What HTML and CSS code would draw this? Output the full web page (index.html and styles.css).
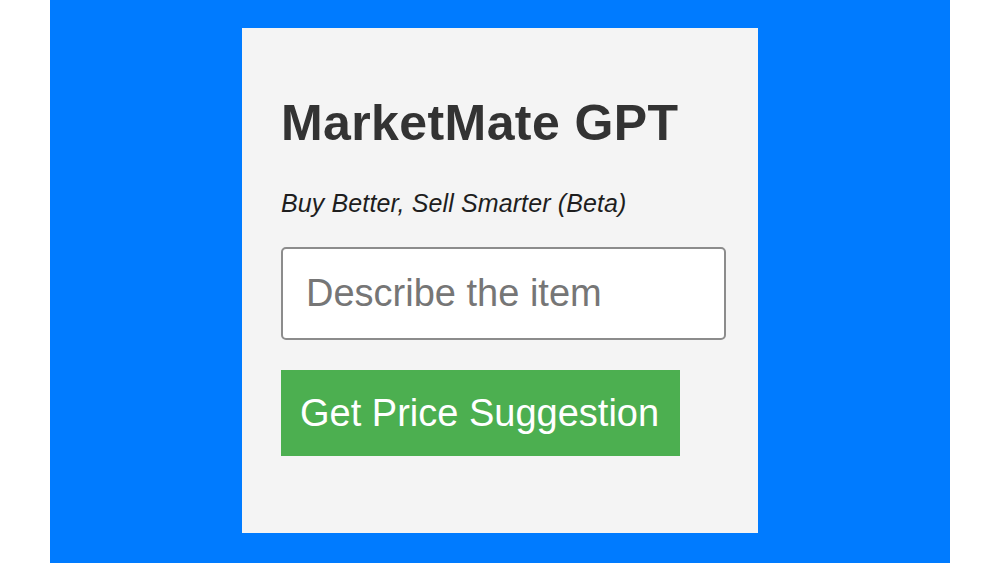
FILE: index.html
```html
<!DOCTYPE html>
<html lang="en">
<head>
<meta charset="utf-8">
<title>MarketMate GPT</title>
<link rel="stylesheet" href="styles.css">
</head>
<body>
<div class="stage">
  <main class="card">
    <h1 class="title">MarketMate GPT</h1>
    <p class="tagline">Buy Better, Sell Smarter (Beta)</p>
    <input class="item-input" type="text" placeholder="Describe the item">
    <div class="actions">
      <button class="suggest-btn" type="button">Get Price Suggestion</button>
    </div>
  </main>
</div>
</body>
</html>
```

FILE: styles.css
```css
html, body {
  margin: 0;
  padding: 0;
  background: #ffffff;
  height: 100%;
}

body {
  font-family: "Liberation Sans", Arial, Helvetica, sans-serif;
}

.stage {
  margin: 0 50px;
  height: 563px;
  background: #007bff;
  display: flex;
  justify-content: center;
  align-items: flex-start;
  overflow: hidden;
}

.card {
  box-sizing: border-box;
  margin-top: 28px;
  width: 516px;
  height: 505px;
  background: #f4f4f4;
  padding: 67px 33px 0 39px;
  display: flex;
  flex-direction: column;
  align-items: flex-start;
}

.title {
  margin: 0;
  font-size: 50px;
  line-height: 57.5px;
  font-weight: bold;
  color: #333333;
  letter-spacing: 0.4px;
}

.tagline {
  margin: 36px 0 0 0;
  font-size: 25px;
  line-height: 28.75px;
  font-style: italic;
  color: #1e1e1e;
  letter-spacing: 0.12px;
}

.item-input {
  box-sizing: border-box;
  margin-top: 30px;
  width: 445px;
  height: 93px;
  padding: 0 20px 0 23px;
  border: 2px solid #8c8c8c;
  border-radius: 5px;
  background: #ffffff;
  font-family: "Liberation Sans", Arial, Helvetica, sans-serif;
  font-size: 38px;
  color: #333333;
  outline: none;
}

.item-input::placeholder {
  color: #767676;
  opacity: 1;
}

.actions {
  margin-top: 30px;
}

.suggest-btn {
  box-sizing: border-box;
  height: 86px;
  padding: 0 21px 0 19px;
  border: none;
  border-radius: 0;
  background: #4caf50;
  color: #ffffff;
  font-family: "Liberation Sans", Arial, Helvetica, sans-serif;
  font-size: 38px;
  cursor: pointer;
}
```
